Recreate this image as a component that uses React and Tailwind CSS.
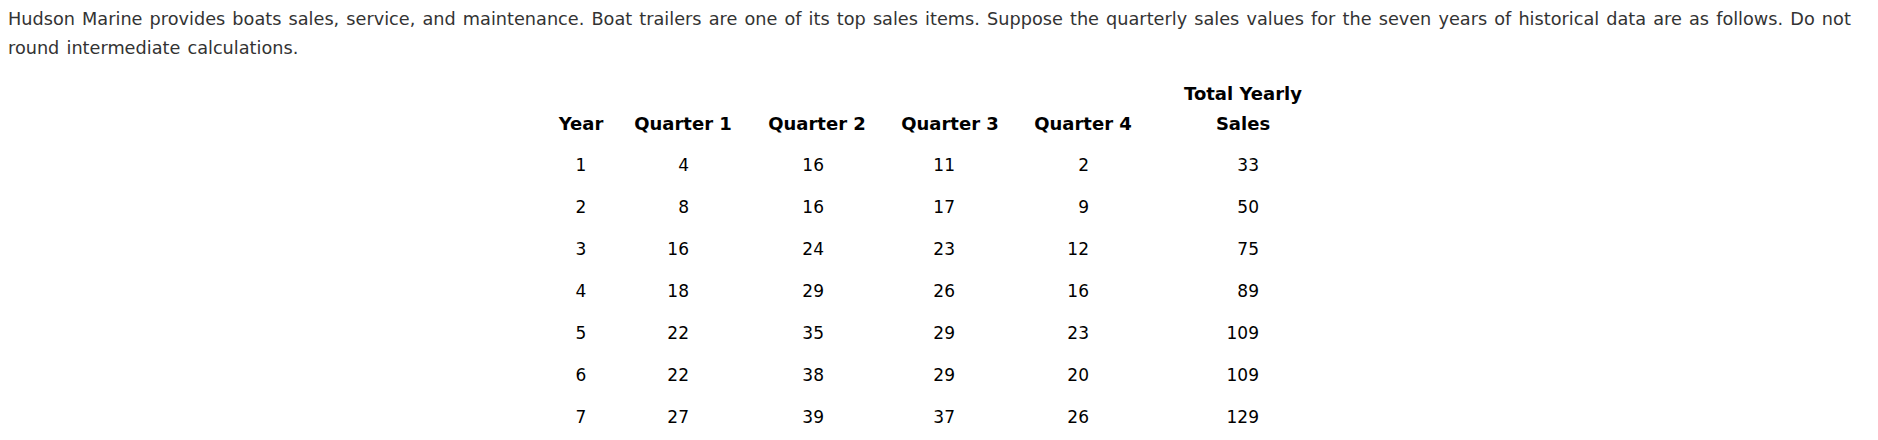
export default function App() {
  const rows = [
    [1, 4, 16, 11, 2, 33],
    [2, 8, 16, 17, 9, 50],
    [3, 16, 24, 23, 12, 75],
    [4, 18, 29, 26, 16, 89],
    [5, 22, 35, 29, 23, 109],
    [6, 22, 38, 29, 20, 109],
    [7, 27, 39, 37, 26, 129],
  ];
  const head = "h-[60px] flex items-end justify-center text-center font-bold leading-[30px] text-[18px]";
  return (
    <div className="w-[1878px] h-[440px] bg-white overflow-hidden px-[8px] pt-[5px] font-['Verdana','DejaVu_Sans',sans-serif]">
      <p className="text-[17.7px] leading-[29px] text-[#333] [word-spacing:1.5px]">
        Hudson Marine provides boats sales, service, and maintenance. Boat trailers are one of its top sales items. Suppose the quarterly sales values for the seven years of historical data are as follows. Do not round intermediate calculations.
      </p>
      <div className="ml-[532px] mt-[16px] grid grid-cols-[82px_122px_146px_120px_146px_174px] text-black text-[17px]">
        <div className={head}>Year</div>
        <div className={head}>Quarter 1</div>
        <div className={head}>Quarter 2</div>
        <div className={head}>Quarter 3</div>
        <div className={head}>Quarter 4</div>
        <div className={head}>Total Yearly<br />Sales</div>
        <div className="col-span-6 h-[5px]"></div>
        {rows.map((r) => (
          <div key={r[0]} className="contents">
            <div className="h-[42px] leading-[42px] text-center">{r[0]}</div>
            <div className="h-[42px] leading-[42px] text-right pr-[55px]">{r[1]}</div>
            <div className="h-[42px] leading-[42px] text-right pr-[66px]">{r[2]}</div>
            <div className="h-[42px] leading-[42px] text-right pr-[55px]">{r[3]}</div>
            <div className="h-[42px] leading-[42px] text-right pr-[67px]">{r[4]}</div>
            <div className="h-[42px] leading-[42px] text-right pr-[71px]">{r[5]}</div>
          </div>
        ))}
      </div>
    </div>
  );
}
